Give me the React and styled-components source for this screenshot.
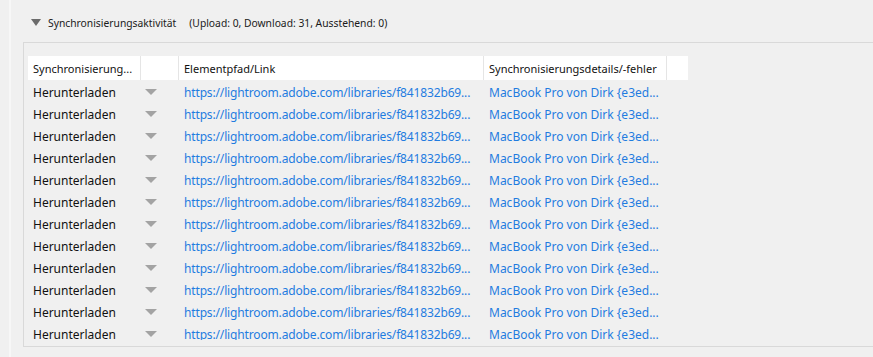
import React from "react";
import styled, { createGlobalStyle } from "styled-components";

const GlobalStyle = createGlobalStyle`
  html, body {
    margin: 0;
    padding: 0;
    background: #f0f0f0;
    overflow: hidden;
  }
  body {
    font-family: "Noto Sans", "Open Sans", sans-serif;
  }
`;

const ROWS = 12;
const LINK = "https://lightroom.adobe.com/libraries/f841832b69...";
const DETAIL = "MacBook Pro von Dirk {e3ed...";

const Page = styled.div`
  width: 873px;
  height: 357px;
  display: flex;
  background: #f0f0f0;
`;

const Gutter = styled.div`
  width: 9px;
  flex: none;
`;

const Content = styled.div`
  flex: 1;
  border-left: 2px solid #f7f7f7;
  padding-left: 12px;
  display: flex;
  flex-direction: column;
  min-width: 0;
`;

const SectionHead = styled.div`
  height: 42px;
  display: flex;
  align-items: center;
  padding-left: 8px;
  padding-top: 3px;
  box-sizing: border-box;
  font-size: 10.3px;
  color: #1a1a1a;
`;

const Caret = styled.span`
  width: 0;
  height: 0;
  border-left: 5px solid transparent;
  border-right: 5px solid transparent;
  border-top: 7px solid ${(p) => p.color || "#555"};
  margin-right: 7px;
`;

const Counts = styled.span`
  margin-left: 13px;
`;

const Panel = styled.div`
  border-top: 1px solid #d9d9d9;
  border-left: 1px solid #d9d9d9;
  border-bottom: 1px solid #d9d9d9;
  height: 305px;
  box-sizing: border-box;
  padding: 13px 0 6px 4px;
  display: flex;
  flex-direction: column;
`;

const Scroller = styled.div`
  flex: 1;
  overflow: hidden;
`;

const Table = styled.div`
  display: grid;
  grid-template-columns: 113px 38px 305px 183px 21px;
  width: max-content;
`;

const HeadCell = styled.div`
  height: 24px;
  background: #fff;
  display: flex;
  align-items: center;
  padding-left: 5px;
  font-size: 11px;
  color: #111;
  white-space: nowrap;
  overflow: hidden;
  box-sizing: border-box;
  border-right: ${(p) => (p.last ? "none" : "1px solid #e5e5e5")};
  margin-bottom: 1px;
`;

const Cell = styled.div`
  height: 22px;
  display: flex;
  align-items: center;
  padding-left: ${(p) => p.pad ?? 5}px;
  font-size: 12px;
  letter-spacing: ${(p) => (p.tight ? "-0.15px" : "0")};
  color: ${(p) => (p.link ? "#1f7ce0" : "#111")};
  white-space: nowrap;
  overflow: hidden;
  box-sizing: border-box;
`;

const RowCaret = styled.span`
  width: 0;
  height: 0;
  border-left: 6px solid transparent;
  border-right: 6px solid transparent;
  border-top: 6px solid #a3a3a3;
`;

export default function App() {
  return (
    <>
      <GlobalStyle />
      <Page>
        <Gutter />
        <Content>
          <SectionHead>
            <Caret color="#6b6b6b" />
            Synchronisierungsaktivität
            <Counts>(Upload: 0, Download: 31, Ausstehend: 0)</Counts>
          </SectionHead>
          <Panel>
            <Scroller>
              <Table>
                <HeadCell>Synchronisierung...</HeadCell>
                <HeadCell />
                <HeadCell>Elementpfad/Link</HeadCell>
                <HeadCell>Synchronisierungsdetails/-fehler</HeadCell>
                <HeadCell last />
                {Array.from({ length: ROWS }).map((_, i) => (
                  <React.Fragment key={i}>
                    <Cell>Herunterladen</Cell>
                    <Cell pad={4}>
                      <RowCaret />
                    </Cell>
                    <Cell link tight>
                      {LINK}
                    </Cell>
                    <Cell link>{DETAIL}</Cell>
                    <Cell />
                  </React.Fragment>
                ))}
              </Table>
            </Scroller>
          </Panel>
        </Content>
      </Page>
    </>
  );
}
